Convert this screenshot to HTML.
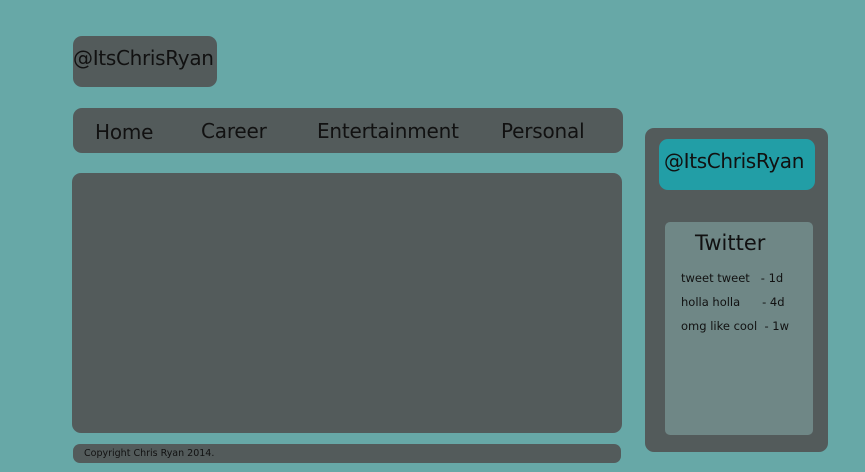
<!DOCTYPE html>
<html><head><style>
body{margin:0;width:865px;height:472px;background:#67a8a7;font-family:"DejaVu Sans","Liberation Sans",sans-serif;position:relative;overflow:hidden;color:#111}
div{position:absolute;box-sizing:border-box}
.d{background:#535b5b}
</style></head><body>
<div class="d" style="left:73px;top:36px;width:144px;height:51px;border-radius:9px;font-size:20px;line-height:44px;letter-spacing:-0.3px">@ItsChrisRyan</div>
<div class="d" style="left:73px;top:108px;width:550px;height:45px;border-radius:9px;font-size:20px;letter-spacing:-0.2px">
<span style="position:absolute;left:22px;top:12px">Home</span>
<span style="position:absolute;left:128px;top:11px">Career</span>
<span style="position:absolute;left:244px;top:11px">Entertainment</span>
<span style="position:absolute;left:428px;top:11px">Personal</span>
</div>
<div class="d" style="left:72px;top:173px;width:550px;height:260px;border-radius:9px"></div>
<div class="d" style="left:73px;top:444px;width:548px;height:19px;border-radius:7px;font-size:9.5px;line-height:20px;padding-left:11px">Copyright Chris Ryan 2014.</div>
<div class="d" style="left:645px;top:128px;width:183px;height:324px;border-radius:9px"></div>
<div style="left:659px;top:139px;width:156px;height:51px;background:#229ea6;border-radius:9px;font-size:20px;line-height:44px;padding-left:5px;letter-spacing:-0.35px">@ItsChrisRyan</div>
<div style="left:665px;top:222px;width:148px;height:213px;background:#6f8786;border-radius:5px">
<div style="left:30px;top:9px;font-size:21px">Twitter</div>
<div style="left:16px;top:44px;font-size:11.5px;line-height:24px;white-space:pre">tweet tweet   - 1d
holla holla      - 4d
omg like cool  - 1w</div>
</div>
</body></html>
